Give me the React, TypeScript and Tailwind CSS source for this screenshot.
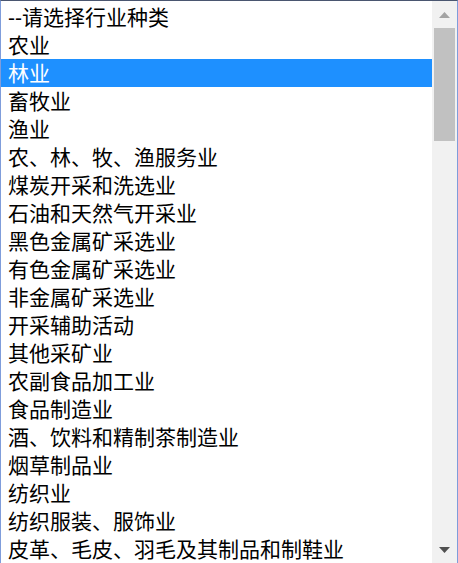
const industries = [
  '--请选择行业种类',
  '农业',
  '林业',
  '畜牧业',
  '渔业',
  '农、林、牧、渔服务业',
  '煤炭开采和洗选业',
  '石油和天然气开采业',
  '黑色金属矿采选业',
  '有色金属矿采选业',
  '非金属矿采选业',
  '开采辅助活动',
  '其他采矿业',
  '农副食品加工业',
  '食品制造业',
  '酒、饮料和精制茶制造业',
  '烟草制品业',
  '纺织业',
  '纺织服装、服饰业',
  '皮革、毛皮、羽毛及其制品和制鞋业',
];

export default function App() {
  const selected = 2;

  return (
    <div className="w-[458px] h-[563px] overflow-hidden bg-white flex border-l border-r border-t border-l-[#7f9ddb] border-r-[#7f9ddb] border-t-[#4a5670]">
      {/* list */}
      <div className="flex-1 flex flex-col pt-[2px] font-['Liberation_Sans','Noto_Sans_CJK_SC',sans-serif] text-[21px] text-black">
        {industries.map((name, i) => (
          <div
            key={i}
            className={`h-[28px] shrink-0 flex items-center pl-[7px] leading-none whitespace-nowrap ${
              i === selected ? 'bg-[#1e90ff] text-white' : ''
            }`}
          >
            {name}
          </div>
        ))}
      </div>

      {/* scrollbar */}
      <div className="w-[25px] shrink-0 bg-[#f1f1f1] flex flex-col items-center">
        <div className="h-[27px] w-full flex items-center justify-center">
          <svg width="11" height="6" viewBox="0 0 11 6">
            <polygon points="0,6 11,6 5.5,0" fill="#a3a3a3" />
          </svg>
        </div>
        <div className="w-[21px] h-[113px] bg-[#c1c1c1]" />
        <div className="flex-1" />
        <div className="h-[27px] w-full flex items-center justify-center">
          <svg width="11" height="6" viewBox="0 0 11 6">
            <polygon points="0,0 11,0 5.5,6" fill="#505050" />
          </svg>
        </div>
      </div>
    </div>
  );
}
